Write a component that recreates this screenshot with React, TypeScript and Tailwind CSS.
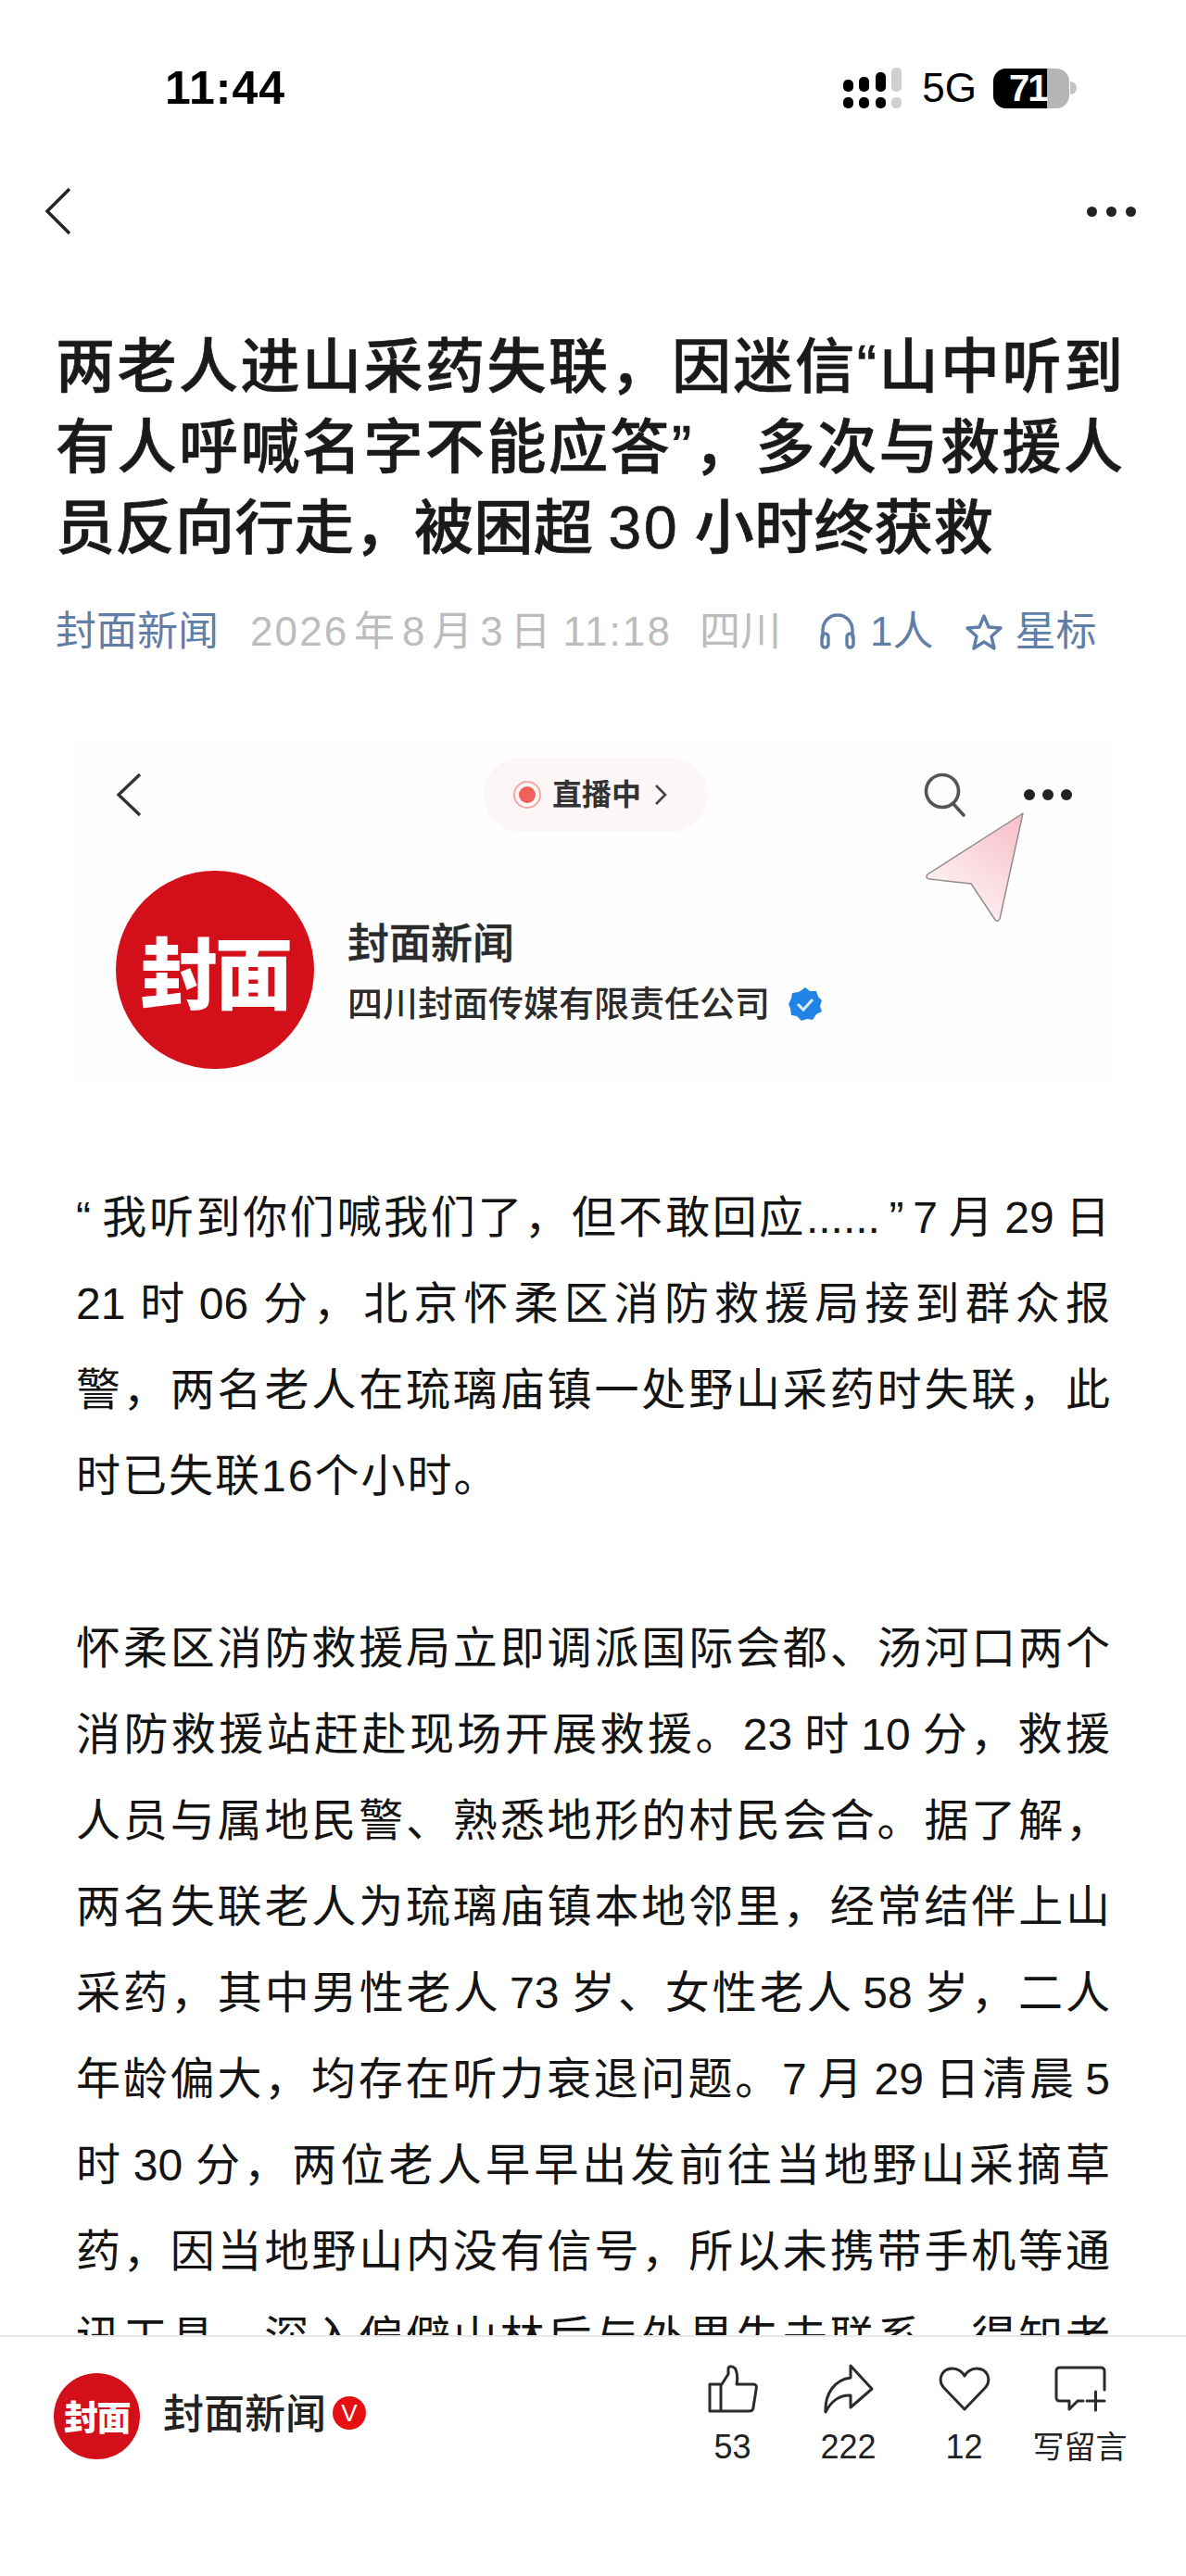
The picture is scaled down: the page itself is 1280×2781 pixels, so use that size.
import React from "react";

const cjk = "font-['Liberation_Sans','Noto_Sans_CJK_SC',sans-serif]";

const p1 = [
  "“\u2009我听到你们喊我们了，但不敢回应......\u2009”\u20097\u2009月\u200929\u2009日",
  "21\u2009时\u200906\u2009分，北京怀柔区消防救援局接到群众报",
  "警，两名老人在琉璃庙镇一处野山采药时失联，此",
];
const p2 = [
  "怀柔区消防救援局立即调派国际会都、汤河口两个",
  "消防救援站赶赴现场开展救援。23\u2009时\u200910\u2009分，救援",
  "人员与属地民警、熟悉地形的村民会合。据了解，",
  "两名失联老人为琉璃庙镇本地邻里，经常结伴上山",
  "采药，其中男性老人\u200973\u2009岁、女性老人\u200958\u2009岁，二人",
  "年龄偏大，均存在听力衰退问题。7\u2009月\u200929\u2009日清晨\u20095",
  "时\u200930\u2009分，两位老人早早出发前往当地野山采摘草",
  "药，因当地野山内没有信号，所以未携带手机等通",
  "讯工具，深入偏僻山林后与外界失去联系。得知老",
];

function Line({ children }: { children: string }) {
  return <div className="[text-align:justify] [text-align-last:justify] whitespace-nowrap">{children}</div>;
}

function Signal() {
  const cols = [
    { h: "h-[13px]", c: "bg-black" },
    { h: "h-[16px]", c: "bg-black" },
    { h: "h-[21px]", c: "bg-black" },
    { h: "h-[26px]", c: "bg-[#cfcfcf]" },
  ];
  return (
    <div className="flex gap-[6.5px] items-end">
      {cols.map((c, i) => (
        <div key={i} className="flex flex-col gap-[6px] w-[11px]">
          <div className={`${c.h} ${c.c} rounded-[5px]`} />
          <div className={`h-[12px] ${c.c} rounded-[5px]`} />
        </div>
      ))}
    </div>
  );
}

function Logo({ size, text }: { size: string; text: string }) {
  return (
    <div className={`${size} rounded-full bg-[#d3101a] flex items-center justify-center shrink-0`}>
      <span className={`${text} text-white font-black tracking-[-0.04em] whitespace-nowrap font-['Noto_Sans_CJK_SC',sans-serif]`}>封面</span>
    </div>
  );
}

function Action({ icon, label, labelClass }: { icon: React.ReactNode; label: string; labelClass: string }) {
  return (
    <div className="w-[125px] flex flex-col items-center">
      <div className="h-[56px] flex items-center justify-center">{icon}</div>
      <div className={`mt-[15px] leading-[40px] text-[#222] ${labelClass}`}>{label}</div>
    </div>
  );
}

export default function App() {
  return (
    <div lang="zh-CN" className={`w-[1280px] h-[2781px] bg-white flex flex-col overflow-hidden ${cjk}`}>
      <main className="flex-1 min-h-0 overflow-hidden">
        {/* Status bar */}
        <div className="h-[70px]" />
        <div className="h-[50px] flex items-center justify-between pl-[178px] pr-[118px]">
          <span className="text-[50px] leading-[50px] font-bold tracking-[1px] text-black font-['Liberation_Sans',sans-serif]">11:44</span>
          <div className="flex items-center">
            <Signal />
            <span className="ml-[22px] text-[44px] leading-[50px] text-black font-['Liberation_Sans',sans-serif]">5G</span>
            <div className="ml-[18px] flex items-center">
              <div className="w-[82px] h-[43px] rounded-[14px] bg-[#b5b5b5] overflow-hidden flex">
                <div className="w-[58px] h-full bg-black text-white font-bold text-[40px] leading-[43px] tracking-[-2px] pl-[17px] font-['Liberation_Sans',sans-serif]">71</div>
              </div>
              <div className="w-[7px] h-[14px] rounded-r-full bg-[#c4c4c4] ml-[1px]" />
            </div>
          </div>
        </div>

        {/* Nav */}
        <div className="mt-[78px] h-[60px] flex items-center justify-between pl-[48px] pr-[54px]">
          <svg width="30" height="52" viewBox="0 0 30 52" fill="none" stroke="#222" strokeWidth="3.4">
            <path d="M27 2 L3 26 L27 50" />
          </svg>
          <div className="flex gap-[10px]">
            <div className="w-[11px] h-[11px] rounded-full bg-[#222]" />
            <div className="w-[11px] h-[11px] rounded-full bg-[#222]" />
            <div className="w-[11px] h-[11px] rounded-full bg-[#222]" />
          </div>
        </div>

        {/* Title */}
        <h1 className="mt-[95px] pl-[60px] pr-[68px] text-[64px] leading-[87px] font-medium [-webkit-text-stroke:0.7px_#1a1a1a] text-[#1a1a1a]">
          <Line>两老人进山采药失联，因迷信“山中听到</Line>
          <Line>有人呼喊名字不能应答”，多次与救援人</Line>
          <div className="whitespace-nowrap tracking-[0.5px]">
            员反向行走，被困超<span className="ml-[16px] mr-[16px] tracking-[3px]">30</span>小时终获救
          </div>
        </h1>

        {/* Meta */}
        <div className="mt-[38px] h-[60px] pl-[60px] flex items-center text-[44px] leading-[60px] whitespace-nowrap">
          <span className="text-[#5f7ea8]">封面新闻</span>
          <span className="ml-[34px] text-[#bcbcbc] tracking-[2.1px]">2026{"\u200A"}年{"\u200A"}8{"\u200A"}月{"\u200A"}3{"\u200A"}日{"\u2009"}11:18</span>
          <span className="ml-[30px] text-[#bcbcbc]">四川</span>
          <svg className="ml-[40px]" width="42" height="44" viewBox="0 0 42 44" fill="none" stroke="#5f7ea8" strokeWidth="3.4" strokeLinecap="round">
            <path d="M5 28 V21 C5 11 12 4 21 4 C30 4 37 11 37 21 V28" />
            <rect x="4" y="24" width="7" height="15" rx="3.5" />
            <rect x="31" y="24" width="7" height="15" rx="3.5" />
          </svg>
          <span className="ml-[14px] text-[#5f7ea8]">1人</span>
          <svg className="ml-[34px]" width="42" height="42" viewBox="0 0 42 42" fill="none" stroke="#5f7ea8" strokeWidth="3.4" strokeLinejoin="round">
            <path d="M21 4 L26 16 L39 17 L29 26 L32 39 L21 32 L10 39 L13 26 L3 17 L16 16 Z" />
          </svg>
          <span className="ml-[12px] text-[#5f7ea8]">星标</span>
        </div>

        {/* Embedded picture card */}
        <div className="mt-[88px] ml-[75px] w-[1125px] h-[370px] bg-[#fefefe] relative">
          <div className="h-[116px] flex items-center">
            <svg className="ml-[50px] shrink-0" width="28" height="48" viewBox="0 0 28 48" fill="none" stroke="#333" strokeWidth="3.4">
              <path d="M26 2 L3 24 L26 46" />
            </svg>
            <div className="ml-[369px] w-[242px] h-[80px] rounded-[40px] bg-[#fcf6f6] flex items-center pl-[32px] shrink-0">
              <div className="w-[30px] h-[30px] rounded-full border-2 border-[#f3a8a4] flex items-center justify-center">
                <div className="w-[18px] h-[18px] rounded-full bg-[#f1605a]" />
              </div>
              <span className="ml-[12px] text-[32px] leading-[40px] font-bold text-[#333]">直播中</span>
              <svg className="ml-[14px]" width="14" height="26" viewBox="0 0 14 26" fill="none" stroke="#444" strokeWidth="2.6">
                <path d="M2 3 L12 13 L2 23" />
              </svg>
            </div>
            <svg className="ml-[233px] shrink-0" width="46" height="48" viewBox="0 0 46 48" fill="none" stroke="#555" strokeWidth="3.6" strokeLinecap="round">
              <circle cx="20" cy="20" r="17.5" />
              <path d="M32 34 L43 46" />
            </svg>
            <div className="ml-[62px] flex gap-[8px] shrink-0">
              <div className="w-[12px] h-[12px] rounded-full bg-[#222]" />
              <div className="w-[12px] h-[12px] rounded-full bg-[#222]" />
              <div className="w-[12px] h-[12px] rounded-full bg-[#222]" />
            </div>
          </div>
          <svg className="absolute left-[923px] top-[76px]" width="112" height="122" viewBox="0 0 112 122">
            <defs>
              <linearGradient id="arrow" x1="1" y1="0" x2="0.3" y2="1">
                <stop offset="0" stopColor="#f8bcc6" />
                <stop offset="1" stopColor="#fdf6f7" />
              </linearGradient>
            </defs>
            <path d="M106 2 L3 68 Q0 72 5 73 L50 78 L76 117 Q79 120 81 116 Z" fill="url(#arrow)" stroke="#8f8a8b" strokeWidth="1.4" strokeLinejoin="round" />
          </svg>
          <div className="flex items-center ml-[50px] mt-[24px]">
            <Logo size="w-[214px] h-[214px]" text="text-[84px]" />
            <div className="ml-[36px] mt-[8px]">
              <div className="text-[45px] leading-[56px] font-medium [-webkit-text-stroke:0.5px_#2b2b2b] text-[#2b2b2b]">封面新闻</div>
              <div className="mt-[10px] flex items-center">
                <span className="text-[38px] leading-[52px] font-medium text-[#2b2b2b]">四川封面传媒有限责任公司</span>
                <svg className="ml-[19px]" width="38" height="38" viewBox="0 0 38 38">
                  <path d="M19 1 L24 5 L31 5 L33 11 L37 15 L35 21 L37 27 L31 30 L27 36 L21 35 L15 37 L10 32 L4 31 L3 24 L1 19 L4 13 L5 7 L12 6 Z" fill="#2283e6" />
                  <path d="M11 19 L17 25 L27 14" fill="none" stroke="#dcefff" strokeWidth="3" />
                </svg>
              </div>
            </div>
          </div>
        </div>

        {/* Article body */}
        <article className="mt-[98px] ml-[82px] w-[1116px] text-[48px] leading-[93px] text-[#141414]">
          <div className="mb-[93px]">
            {p1.map((l) => <Line key={l}>{l}</Line>)}
            <div className="whitespace-nowrap tracking-[2px]">时已失联16个小时。</div>
          </div>
          <div>
            {p2.map((l) => <Line key={l}>{l}</Line>)}
          </div>
        </article>
      </main>

      {/* Bottom bar */}
      <footer className="h-[260px] shrink-0 bg-white border-t-2 border-[#e8e8e8] flex items-start justify-between pt-[28px] pl-[58px] pr-[52px]">
        <div className="flex items-center mt-[11px]">
          <Logo size="w-[93px] h-[93px]" text="text-[37px]" />
          <span className="ml-[25px] text-[44px] leading-[60px] font-medium text-[#222] -mt-[4px]">封面新闻</span>
          <div className="ml-[7px] -mt-[8px] w-[36px] h-[36px] rounded-full bg-[#e60f12] text-white text-[26px] leading-[36px] text-center font-['Liberation_Sans',sans-serif]">V</div>
        </div>
        <div className="flex">
          <Action
            label="53"
            labelClass="text-[36px]"
            icon={
              <svg width="54" height="52" viewBox="0 0 54 52" fill="none" stroke="#2b2b2b" strokeWidth="3" strokeLinejoin="round">
                <path d="M2 21 H15 L22 10 V4 C22 1 28 1 30 5 C32 10 32 16 31 21 H49 C52 21 53 23 52 27 L49 46 C49 49 47 50 44 50 H2 Z" />
                <path d="M14 21 V50" />
              </svg>
            }
          />
          <Action
            label="222"
            labelClass="text-[36px]"
            icon={
              <svg width="54" height="54" viewBox="0 0 54 54" fill="none" stroke="#2b2b2b" strokeWidth="3" strokeLinejoin="round">
                <path d="M29 2 L52 27 L29 47 V34 C18 33 8 40 2 52 C1 32 12 17 29 15 Z" />
              </svg>
            }
          />
          <Action
            label="12"
            labelClass="text-[36px]"
            icon={
              <svg width="56" height="48" viewBox="0 0 56 48" fill="none" stroke="#2b2b2b" strokeWidth="3" strokeLinejoin="round">
                <path d="M28 46 L5 22 C-1 14 3 2 15 2 C21 2 26 6 28 10 C30 6 35 2 41 2 C53 2 57 14 51 22 Z" />
              </svg>
            }
          />
          <Action
            label="写留言"
            labelClass="text-[34px]"
            icon={
              <svg width="56" height="50" viewBox="0 0 56 50" fill="none" stroke="#2b2b2b" strokeWidth="3" strokeLinecap="round" strokeLinejoin="round">
                <path d="M54 26 V6 C54 3 52 2 50 2 H6 C3 2 2 3 2 6 V34 C2 37 3 38 6 38 H16 V47 L25 38 H31" />
                <path d="M35 38 H54 M44.5 28 V48" />
              </svg>
            }
          />
        </div>
      </footer>
    </div>
  );
}
